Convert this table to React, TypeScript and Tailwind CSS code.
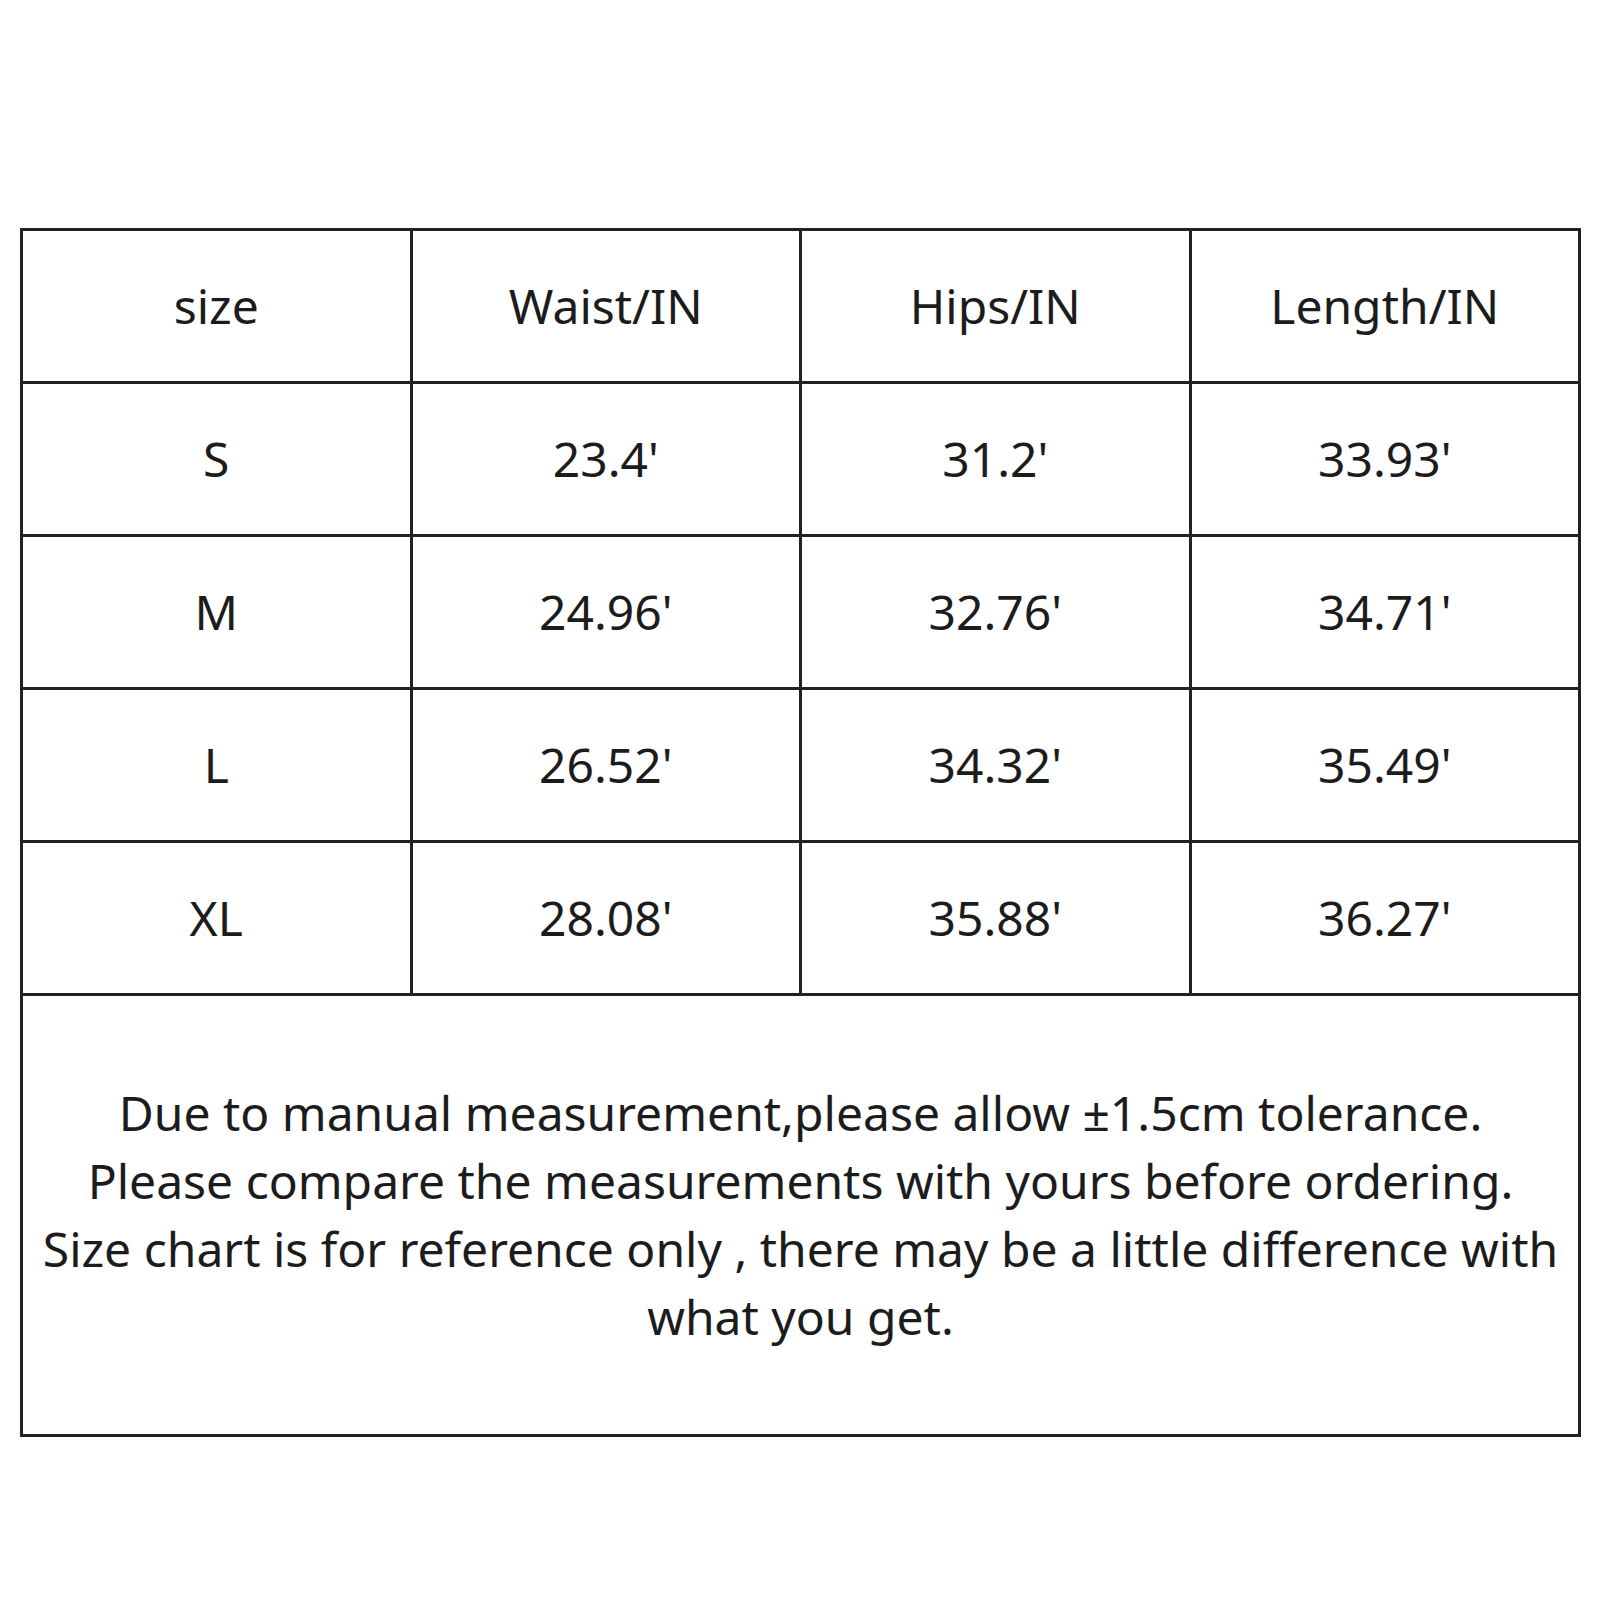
const HEADERS = ["size", "Waist/IN", "Hips/IN", "Length/IN"];

const ROWS: string[][] = [
  ["S", "23.4'", "31.2'", "33.93'"],
  ["M", "24.96'", "32.76'", "34.71'"],
  ["L", "26.52'", "34.32'", "35.49'"],
  ["XL", "28.08'", "35.88'", "36.27'"],
];

const NOTE_LINES = [
  "Due to manual measurement,please allow ±1.5cm tolerance.",
  "Please compare the measurements with yours before ordering.",
  "Size chart is for reference only , there may be a little difference with",
  "what you get.",
];

function Cell({ children }: { children: string }) {
  return (
    <div className="flex items-center justify-center bg-white h-[150px]">
      {children}
    </div>
  );
}

export default function App() {
  return (
    <div className="w-[1601px] h-[1601px] bg-white pt-[228px] pl-[20px] font-['Noto_Sans','Open_Sans',sans-serif] text-[#1c1c1c]">
      <div className="w-[1561px] bg-[#222] p-[3px]">
        <div className="grid grid-cols-4 gap-[3px] text-[48px] leading-none">
          {HEADERS.map((h) => (
            <Cell key={h}>{h}</Cell>
          ))}
          {ROWS.flatMap((row) =>
            row.map((v, i) => <Cell key={row[0] + i}>{v}</Cell>)
          )}
        </div>

        {/* Note */}
        <div className="mt-[3px] h-[438px] bg-white flex flex-col items-center justify-center text-[48px] leading-[68px]">
          {NOTE_LINES.map((line) => (
            <div key={line} className="whitespace-nowrap">
              {line}
            </div>
          ))}
        </div>
      </div>
    </div>
  );
}
